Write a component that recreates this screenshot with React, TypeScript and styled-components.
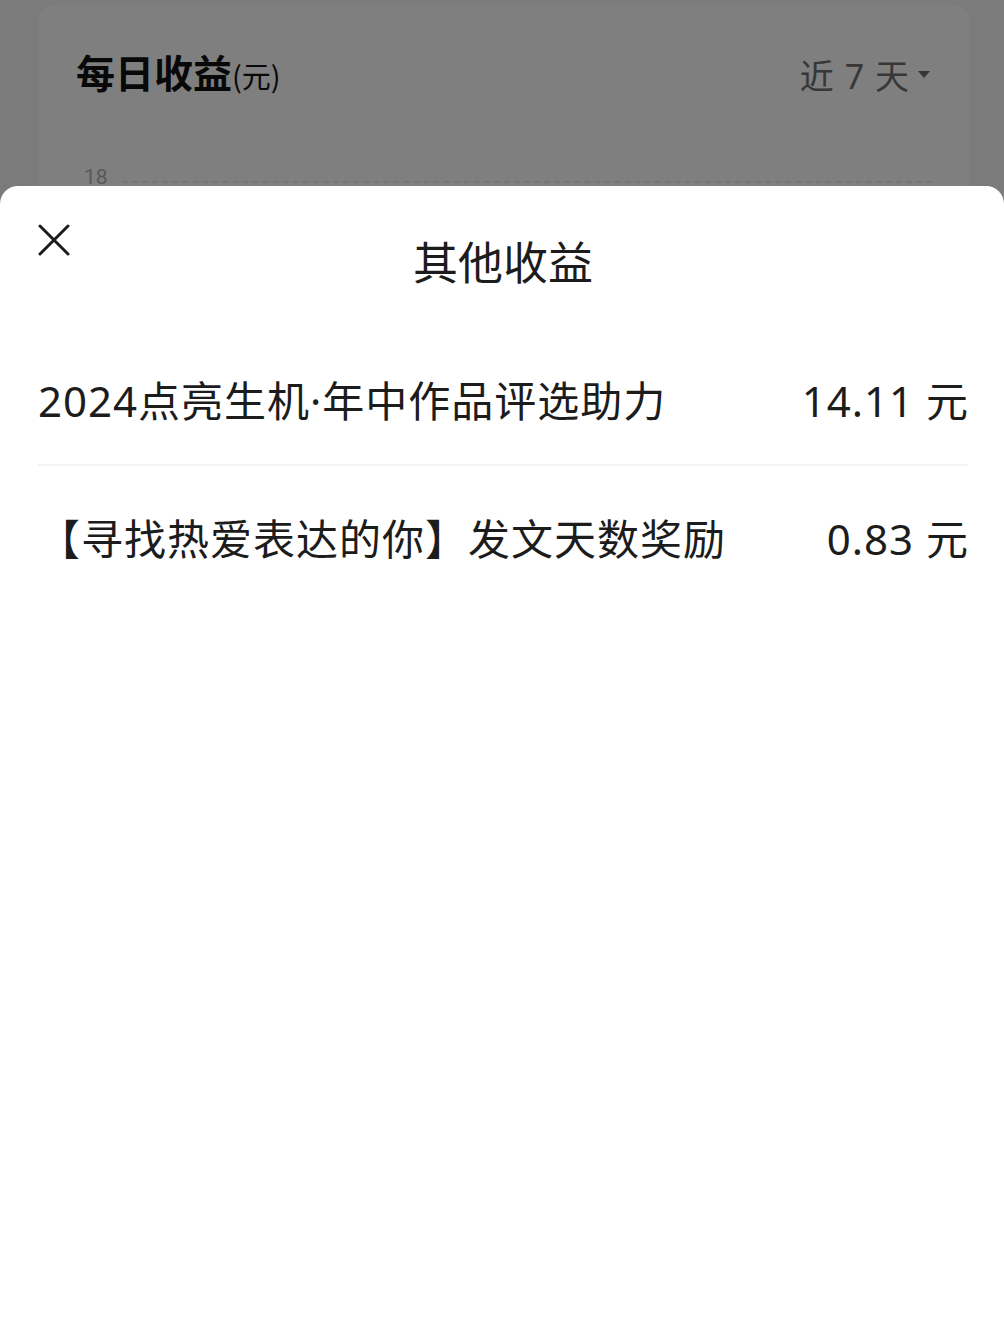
import styled, { createGlobalStyle } from 'styled-components';

const Global = createGlobalStyle`
  html, body {
    margin: 0;
    padding: 0;
    background: #f6f6f6;
    font-family: "Noto Sans", "Noto Sans CJK SC", sans-serif;
  }
`;

const Page = styled.div`
  width: 1004px;
  height: 1317px;
  overflow: hidden;
  position: relative;
  background: #f6f6f6;
  padding: 5px 34px 0 38px;
  box-sizing: border-box;
`;

const Card = styled.div`
  background: #ffffff;
  border-radius: 16px;
  height: 600px;
  padding: 0 38px;
`;

const CardHead = styled.div`
  display: flex;
  align-items: center;
  justify-content: space-between;
  height: 132px;
`;

const CardTitle = styled.div`
  font-family: "Noto Sans CJK SC", sans-serif;
  font-size: 39px;
  font-weight: 700;
  color: #111;
  display: flex;
  align-items: baseline;
`;

const Unit = styled.span`
  font-size: 29px;
  font-weight: 400;
`;

const RangePicker = styled.div`
  display: flex;
  align-items: center;
  gap: 8px;
  font-size: 34px;
  color: #6e6e6e;
  letter-spacing: 1px;
  padding-right: 2px;
  margin-top: 6px;
`;

const Caret = styled.span`
  width: 0;
  height: 0;
  border-left: 6px solid transparent;
  border-right: 6px solid transparent;
  border-top: 7px solid #6e6e6e;
`;

const AxisRow = styled.div`
  display: flex;
  align-items: center;
  gap: 14px;
  padding-left: 8px;
  margin-top: 28px;
`;

const AxisLabel = styled.span`
  font-family: "Roboto", sans-serif;
  font-size: 21px;
  color: #b0b0b0;
`;

const GridLine = styled.div`
  flex: 1;
  border-top: 2px dashed #ececec;
  margin-top: 10px;
`;

const Dim = styled.div`
  position: absolute;
  inset: 0;
  background: rgba(0, 0, 0, 0.5);
`;

const Sheet = styled.div`
  position: absolute;
  left: 0;
  right: 0;
  top: 186px;
  bottom: 0;
  background: #ffffff;
  border-radius: 18px 18px 0 0;
  padding: 0 36px 0 38px;
  display: flex;
  flex-direction: column;
`;

const SheetHead = styled.div`
  position: relative;
  height: 146px;
  display: flex;
  align-items: center;
  justify-content: center;
`;

const CloseButton = styled.button`
  position: absolute;
  left: 0;
  top: 38px;
  width: 32px;
  height: 32px;
  padding: 0;
  border: 0;
  background: none;
  display: flex;
`;

const SheetTitle = styled.div`
  font-family: "Noto Sans CJK SC", sans-serif;
  font-size: 45px;
  color: #1c1c1c;
  margin-top: 2px;
`;

const Row = styled.div<{ $h: number }>`
  height: ${(p) => p.$h}px;
  display: flex;
  align-items: center;
  justify-content: space-between;
  font-size: 42px;
  letter-spacing: 1px;
  color: #1c1c1c;
`;

const Divider = styled.div`
  height: 2px;
  background: #f3f3f3;
`;

const Name = styled.span`
  white-space: nowrap;
`;

const Amount = styled.span`
  white-space: nowrap;
  margin-right: -1px;
`;

const items = [
  { name: '2024点亮生机·年中作品评选助力', amount: '14.11 元', h: 132 },
  { name: '【寻找热爱表达的你】发文天数奖励', amount: '0.83 元', h: 140 },
];

export default function App() {
  return (
    <>
      <Global />
      <Page>
        <Card>
          <CardHead>
            <CardTitle>
              每日收益<Unit>(元)</Unit>
            </CardTitle>
            <RangePicker>
              近 7 天<Caret />
            </RangePicker>
          </CardHead>
          <AxisRow>
            <AxisLabel>18</AxisLabel>
            <GridLine />
          </AxisRow>
        </Card>
        <Dim />
        <Sheet>
          <SheetHead>
            <CloseButton aria-label="关闭">
              <svg width="32" height="32" viewBox="0 0 32 32">
                <path d="M2 2 L30 30 M30 2 L2 30" stroke="#1c1c1c" strokeWidth="3" strokeLinecap="round" />
              </svg>
            </CloseButton>
            <SheetTitle>其他收益</SheetTitle>
          </SheetHead>
          {items.map((it, i) => (
            <div key={it.name}>
              {i > 0 && <Divider />}
              <Row $h={it.h}>
                <Name>{it.name}</Name>
                <Amount>{it.amount}</Amount>
              </Row>
            </div>
          ))}
        </Sheet>
      </Page>
    </>
  );
}
